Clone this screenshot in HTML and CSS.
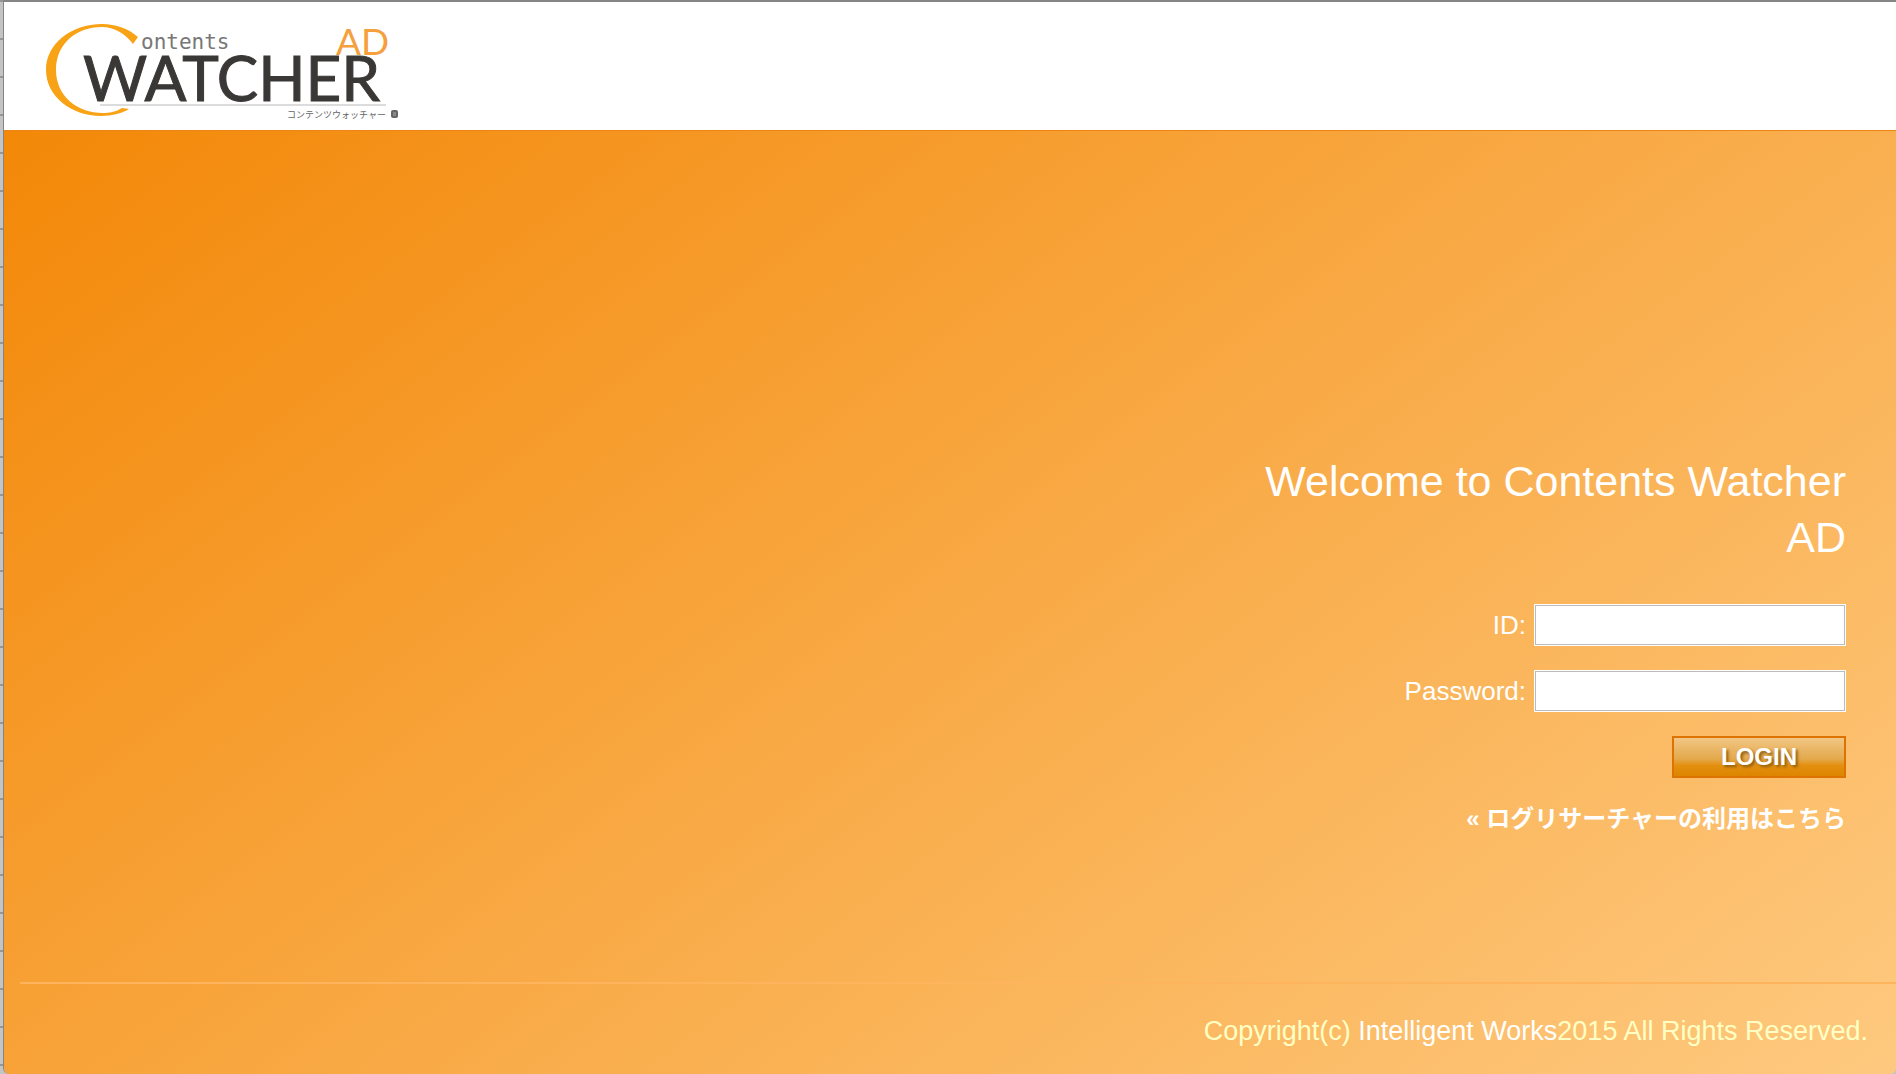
FILE: index.html
```html
<!DOCTYPE html>
<html lang="ja">
<head>
    <meta charset="UTF-8">
    <meta name="viewport" content="width=device-width, initial-scale=1.0">
    <title>Contents Watcher AD</title>
    <link rel="stylesheet" href="styles.css">
</head>
<body>
    <div class="window">
        <header class="header">
            <svg class="logo" width="400" height="128" viewBox="0 0 400 128" role="img" aria-label="Contents Watcher AD">
                <path class="logo-c" d="M134 35 C125 27 112 22 98 22 C67 22 42 42 42 68 C42 94 67 114 97 114 C108 114 119 111 125 107 L118 106 C112 110 105 111 99 111 C73 111 52 94 52 68 C52 42 72 25 98 25 C110 25 122 32 129 42 Z"/>
                <text class="logo-small" x="137" y="47">ontents</text>
                <text class="logo-ad" x="332" y="53">AD</text>
                <text class="logo-main" x="79" y="99">WATCHER</text>
                <path class="logo-line" d="M96 103 H382"/>
                <text class="logo-kana" x="283" y="116">コンテンツウォッチャー</text>
                <rect class="logo-mark" x="387" y="108" width="7" height="8" rx="2"/>
                <path class="logo-mark-line" d="M389 111 H392 M389 113 H392"/>
            </svg>
        </header>

        <main class="main">
            <form class="login">
                <h1 class="welcome">Welcome to Contents Watcher AD</h1>
                <div class="row">
                    <label for="login-id">ID:</label>
                    <input type="text" id="login-id">
                </div>
                <div class="row">
                    <label for="password">Password:</label>
                    <input type="password" id="password">
                </div>
                <button type="button" class="login-btn">LOGIN</button>
                <a class="research" href="#">« ログリサーチャーの利用はこちら</a>
            </form>
            <footer class="footer">
                Copyright(c) <a href="#">Intelligent Works</a>2015 All Rights Reserved.
            </footer>
        </main>
    </div>
</body>
</html>
```

FILE: styles.css
```css
* {
    box-sizing: border-box;
}

body {
    margin: 0;
    font-family: "Liberation Sans", "Noto Sans CJK JP", sans-serif;
    font-size: 26px;
    color: #fff;
    background: repeating-linear-gradient(#969696 0, #969696 2px, #c4c4c2 2px, #c4c4c2 38px);
}

.window {
    display: flex;
    flex-direction: column;
    min-height: 100vh;
    margin-left: 3px;
    border-left: 1px solid #858585;
    border-top: 2px solid #858585;
    border-radius: 0 0 6px 6px;
    overflow: hidden;
}

.header {
    height: 128px;
    background: #fff;
}

.logo {
    display: block;
}

.logo-c {
    fill: #f8a316;
}

.logo-small {
    font: 21px "DejaVu Sans Mono", monospace;
    fill: #777;
}

.logo-ad {
    font: 37px Lato, sans-serif;
    fill: #f5a03c;
}

.logo-main {
    font: 62px Lato, sans-serif;
    fill: #3a3836;
    stroke: #3a3836;
    stroke-width: 1;
}

.logo-line {
    stroke: #dcdcdc;
    stroke-width: 2;
}

.logo-kana {
    font: 9px "Noto Sans CJK JP", sans-serif;
    fill: #666;
}

.logo-mark {
    fill: #666;
}

.logo-mark-line {
    stroke: #aaa;
}

.main {
    flex: 1;
    display: flex;
    flex-direction: column;
    background: linear-gradient(143deg, #f38808, #fec97f);
    border-top: 1px solid #ee8512;
}

.login {
    display: flex;
    flex-direction: column;
    align-items: flex-end;
    flex: 1;
    gap: 24px;
    padding: 322px 50px 0 0;
}

.welcome {
    width: 640px;
    margin: 0 0 15px;
    font-size: 43px;
    font-weight: normal;
    line-height: 56px;
    text-align: right;
}

.row {
    display: flex;
    align-items: center;
    gap: 8px;
}

.row input {
    width: 312px;
    height: 42px;
    padding: 0 8px;
    font-size: 24px;
    background: #fff;
    border: 1px solid #fff;
    box-shadow: inset 0 0 0 1px #bbb;
}

.login-btn {
    width: 174px;
    height: 42px;
    padding: 0;
    font: bold 24px "Liberation Sans", sans-serif;
    color: #fff;
    text-shadow: 2px 2px 3px #8a5a10;
    background: linear-gradient(#f2c684, #e3a94c 55%, #e4900f 72%, #dc8500);
    border: 2px solid #dd7300;
    cursor: pointer;
}

.research {
    font-size: 24px;
    font-weight: bold;
    line-height: 34px;
    color: #fff;
    text-decoration: none;
}

.footer {
    margin-left: 16px;
    padding: 30px 28px 26px 0;
    font-size: 27px;
    line-height: 34px;
    text-align: right;
    color: #ffffc4;
    border-top: 2px solid #fdb45c;
}

.footer a {
    color: #fff;
    text-decoration: none;
}
```
